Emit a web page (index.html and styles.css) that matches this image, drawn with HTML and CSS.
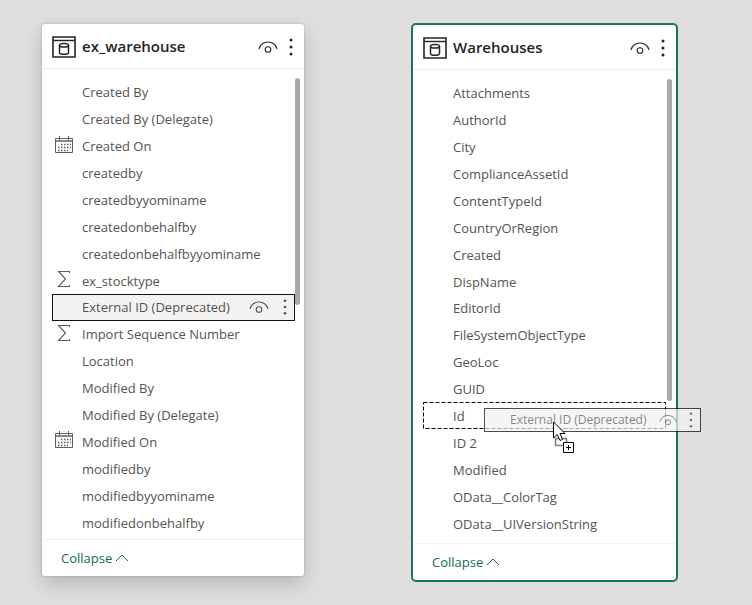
FILE: index.html
```html
<!DOCTYPE html>
<html lang="en">
<head>
<meta charset="utf-8">
<title>Model view</title>
<link rel="stylesheet" href="styles.css">
</head>
<body>
<svg class="defs" aria-hidden="true">
  <symbol id="table" viewBox="0 0 24 22"><g fill="none" stroke="#252423"><path d="M1 1H23V21H1Z" stroke-width="1.6"/><path d="M1 4.5H23" stroke-width="1.4"/><ellipse cx="12" cy="9.2" rx="4.5" ry="1.8" stroke-width="1.5"/><path d="M7.5 9.2V16.5C7.5 18.9 16.5 18.9 16.5 16.5V9.2" stroke-width="1.5"/></g></symbol>
  <symbol id="eye" viewBox="0 0 20 14"><g fill="none" stroke="currentColor" stroke-width="1.1"><path d="M1 9C2 4.500 6 2 10 2S18 4.500 19 9"/><circle cx="10" cy="9.500" r="2.800"/></g></symbol>
  <symbol id="dots" viewBox="0 0 4 18"><g fill="currentColor"><circle cx="2" cy="2" r="1.500"/><circle cx="2" cy="9" r="1.500"/><circle cx="2" cy="16" r="1.500"/></g></symbol>
  <symbol id="calendar" viewBox="0 0 18 18"><g fill="none" stroke="#605e5c"><path d="M.5 2.500H17.500V16.500H.5Z"/><path d="M1 5H17" stroke="#8a8886" stroke-width="2"/><path d="M4.500 0V4M13.500 0V4"/><path d="M6 8.500H16M3 11.500H16M3 14.500H13" stroke-dasharray="1.500 1.500" stroke-width="1.300"/></g></symbol>
  <symbol id="sum" viewBox="0 0 14 18"><path d="M12.500 3V1.500H1.500L8.500 9L1.500 16.500H12.500V15" fill="none" stroke="#605e5c" stroke-width="1.100"/></symbol>
  <symbol id="up" viewBox="0 0 14 8"><path d="M1 7L7 1L13 7" fill="none" stroke="currentColor"/></symbol>
</svg>
<main class="canvas">
  <section class="card" aria-label="ex_warehouse">
    <header class="head">
      <svg class="table-icon"><use href="#table"/></svg>
      <h2>ex_warehouse</h2>
      <button class="icon-btn" aria-label="Hide table"><svg class="eye"><use href="#eye"/></svg></button>
      <button class="icon-btn" aria-label="More options"><svg class="dots"><use href="#dots"/></svg></button>
    </header>
    <div class="body">
      <ul class="fields">
        <li>Created By</li>
        <li>Created By (Delegate)</li>
        <li><svg class="type calendar"><use href="#calendar"/></svg>Created On</li>
        <li>createdby</li>
        <li>createdbyyominame</li>
        <li>createdonbehalfby</li>
        <li>createdonbehalfbyyominame</li>
        <li><svg class="type sum"><use href="#sum"/></svg>ex_stocktype</li>
        <li class="selected"><span class="name">External ID (Deprecated)</span>
          <button class="icon-btn" aria-label="Hide field"><svg class="eye"><use href="#eye"/></svg></button>
          <button class="icon-btn" aria-label="More options"><svg class="dots small"><use href="#dots"/></svg></button></li>
        <li><svg class="type sum"><use href="#sum"/></svg>Import Sequence Number</li>
        <li>Location</li>
        <li>Modified By</li>
        <li>Modified By (Delegate)</li>
        <li><svg class="type calendar"><use href="#calendar"/></svg>Modified On</li>
        <li>modifiedby</li>
        <li>modifiedbyyominame</li>
        <li>modifiedonbehalfby</li>
      </ul>
      <div class="thumb"></div>
    </div>
    <footer class="foot"><button class="collapse">Collapse<svg class="up"><use href="#up"/></svg></button></footer>
  </section>

  <section class="card target" aria-label="Warehouses">
    <header class="head">
      <svg class="table-icon"><use href="#table"/></svg>
      <h2>Warehouses</h2>
      <button class="icon-btn" aria-label="Hide table"><svg class="eye"><use href="#eye"/></svg></button>
      <button class="icon-btn" aria-label="More options"><svg class="dots"><use href="#dots"/></svg></button>
    </header>
    <div class="body">
      <ul class="fields">
        <li>Attachments</li>
        <li>AuthorId</li>
        <li>City</li>
        <li>ComplianceAssetId</li>
        <li>ContentTypeId</li>
        <li>CountryOrRegion</li>
        <li>Created</li>
        <li>DispName</li>
        <li>EditorId</li>
        <li>FileSystemObjectType</li>
        <li>GeoLoc</li>
        <li>GUID</li>
        <li class="drop">
          <svg class="outline"><rect x=".5" y=".5" width="242" height="26"/></svg>Id
          <div class="ghost"><span class="name">External ID (Deprecated)</span><svg class="eye"><use href="#eye"/></svg><svg class="dots small"><use href="#dots"/></svg></div>
          <svg class="cursor" viewBox="0 0 22 33"><path d="M2.500 17.500H13.500V24.500H2.500Z" fill="none" stroke="#000" stroke-width="1.500" stroke-dasharray="1 1"/><path d="M.5 1V17L4.200 13.500L7 19.500L9.500 18.300L7 12.500H12Z" fill="#fff" stroke="#000"/><path d="M10.500 21.500H20.500V31.500H10.500Z" fill="#fff" stroke="#000"/><path d="M13 26.500H18M15.500 24V29" stroke="#000"/></svg>
        </li>
        <li>ID 2</li>
        <li>Modified</li>
        <li>OData__ColorTag</li>
        <li>OData__UIVersionString</li>
      </ul>
      <div class="thumb"></div>
    </div>
    <footer class="foot"><button class="collapse">Collapse<svg class="up"><use href="#up"/></svg></button></footer>
  </section>
</main>
</body>
</html>
```
FILE: styles.css
```css
* { box-sizing: border-box; }
body {
  margin: 0;
  min-height: 100vh;
  background: #e0dfdd;
  color: #555351;
  font: 13px/18px "Open Sans", "Noto Sans", sans-serif;
}
.defs { position: absolute; width: 0; height: 0; }
svg { display: block; flex: none; }
button {
  padding: 0;
  border: 0;
  background: none;
  color: inherit;
  font: inherit;
}
.canvas {
  display: grid;
  grid-template-columns: 262fr 267fr;
  align-items: start;
  gap: 107px;
  padding: 23px 74px 0 42px;
}
.card {
  margin-top: 1px;
  background: #fff;
  border-radius: 3px;
  box-shadow: 0 8px 20px rgba(0, 0, 0, .18), 0 0 3px rgba(0, 0, 0, .18);
}
.card.target {
  margin-top: 0;
  border: 2px solid #117865;
  border-radius: 5px;
  box-shadow: none;
}
.head {
  display: flex;
  align-items: center;
  height: 45px;
  padding: 2px 11px 0 10px;
  border-bottom: 1px solid #edebe9;
}
.table-icon { width: 24px; height: 22px; }
h2 {
  flex: 1;
  margin: 0 0 0 6px;
  padding-bottom: 2px;
  color: #252423;
  font-size: 15px;
  font-weight: 600;
  line-height: 20px;
}
.eye { width: 20px; height: 14px; }
.dots { width: 4px; height: 18px; }
.dots.small { height: 16px; }
.head .icon-btn + .icon-btn { margin-left: 11px; }
.head .icon-btn { color: #252423; }
.body {
  position: relative;
  padding: 10px 9px 3px 10px;
}
.target .body { padding-bottom: 6px; }
.fields {
  display: grid;
  grid-auto-rows: 1fr;
  height: 457px;
  margin: 0;
  padding: 0;
  list-style: none;
}
.fields li {
  position: relative;
  display: flex;
  align-items: center;
  padding-left: 30px;
}
.type { position: absolute; top: 3px; }
.calendar { left: 3px; width: 18px; height: 18px; }
.sum { left: 5px; width: 14px; height: 18px; }
.name { flex: 1; }
.fields .selected {
  padding: 0 8px 0 30px;
  background: #f3f2f1;
  box-shadow: inset 0 0 0 1px #111;
}
.selected .icon-btn + .icon-btn { margin-left: 14px; }
.thumb {
  position: absolute;
  top: 9px;
  right: 4px;
  width: 5px;
  height: 227px;
  border-radius: 3px;
  background: #aaa9a8;
}
.target .thumb { height: 322px; }
.outline {
  position: absolute;
  top: -1px;
  left: 0;
  width: 243px;
  height: 27px;
  fill: none;
  stroke: #000;
  stroke-dasharray: 4 2;
}
.drop { z-index: 1; }
.ghost {
  position: absolute;
  top: 5px;
  left: 61px;
  display: flex;
  align-items: center;
  width: 217px;
  height: 24px;
  padding: 0 7px 0 25px;
  border: 1px solid #000;
  background: #f3f2f1;
  font-size: 12px;
  opacity: .7;
}
.ghost .eye { width: 18px; }
.ghost .dots { margin-left: 12px; }
.cursor {
  position: absolute;
  top: 18px;
  left: 130px;
  width: 22px;
  height: 33px;
}
.foot {
  padding: 9px 19px;
  border-top: 1px solid #f3f2f1;
}
.collapse {
  display: flex;
  align-items: center;
  gap: 3px;
  color: #0f6b5c;
}
.up { width: 14px; height: 8px; }
```
